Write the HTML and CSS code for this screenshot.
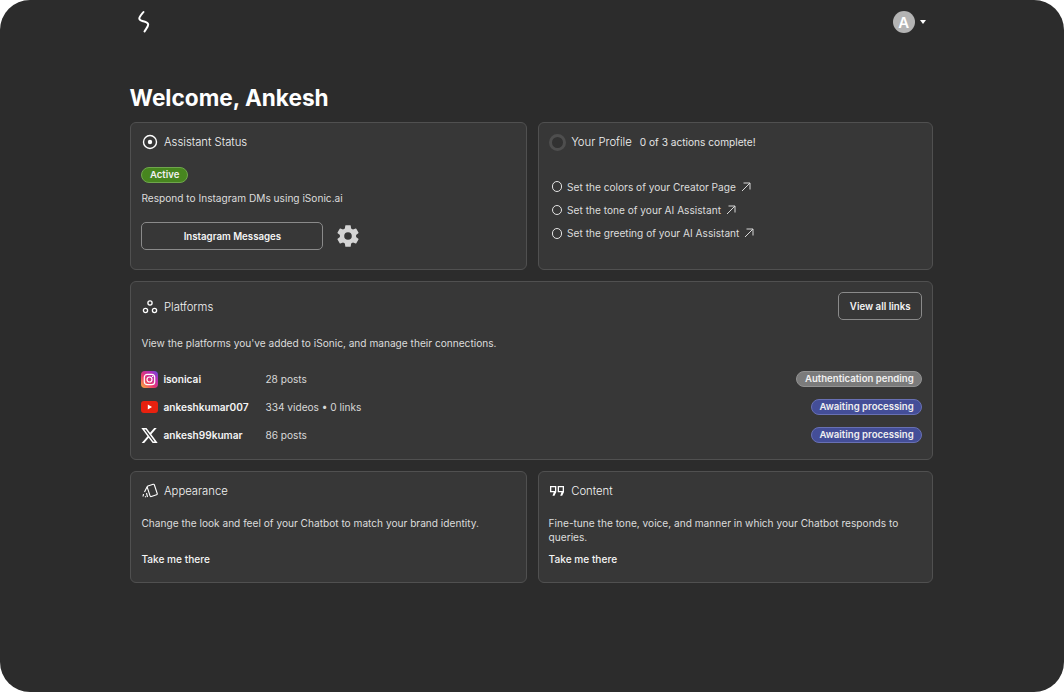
FILE: index.html
```html
<!DOCTYPE html>
<html lang="en">
<head>
<meta charset="utf-8">
<title>iSonic Dashboard</title>
<link rel="stylesheet" href="styles.css">
</head>
<body>
<div class="frame">
  <div class="page">
    <header class="topbar">
      <svg class="logo" width="14" height="24" viewBox="0 0 14 24" fill="none" stroke="#fff" stroke-width="2" stroke-linecap="round" stroke-linejoin="round"><path d="M6.500 2C4.500 4.500 2 7 2.300 8.700C2.500 10.300 4 10.700 6 11.200C8.500 11.800 11 12.300 11.200 14.500C11.300 16.500 9 19 7.500 21.500"/></svg>
      <div class="user">
        <span class="avatar">A</span>
        <span class="caret"></span>
      </div>
    </header>
    <h1 class="welcome">Welcome, Ankesh</h1>
    <main class="grid">
      <section class="card status">
        <div class="head">
          <svg class="hicon" width="16" height="16" viewBox="0 0 16 16" fill="none"><circle cx="8" cy="8" r="6.500" stroke="#fff" stroke-width="1.400"/><circle cx="8" cy="8" r="2.200" fill="#fff"/></svg>
          <h2>Assistant Status</h2>
        </div>
        <span class="pill green">Active</span>
        <p class="text respond">Respond to Instagram DMs using iSonic.ai</p>
        <div class="actions">
          <button class="btn wide">Instagram Messages</button>
          <svg width="26" height="26" viewBox="0 0 24 24" fill="#d4d4d4"><path fill-rule="evenodd" d="M19.430 12.980c.04-.32.07-.64.07-.98s-.03-.66-.07-.98l2.110-1.650a.5.5 0 0 0 .12-.64l-2-3.460a.5.5 0 0 0-.61-.22l-2.490 1a7.300 7.300 0 0 0-1.690-.98l-.38-2.650A.49.49 0 0 0 14 2h-4a.49.49 0 0 0-.49.42l-.38 2.650c-.61.25-1.170.59-1.690.98l-2.490-1a.5.5 0 0 0-.61.22l-2 3.460a.49.49 0 0 0 .12.64l2.110 1.650c-.04.32-.07.65-.07.98s.03.66.07.98l-2.110 1.650a.5.5 0 0 0-.12.64l2 3.460c.12.22.39.3.61.22l2.490-1c.52.4 1.080.73 1.690.98l.38 2.650c.03.24.24.42.49.42h4c.25 0 .46-.18.49-.42l.38-2.650c.61-.25 1.170-.59 1.690-.98l2.490 1c.23.09.49 0 .61-.22l2-3.460a.5.5 0 0 0-.12-.64l-2.110-1.650ZM12 15.500a3.500 3.500 0 1 1 0-7 3.500 3.500 0 0 1 0 7Z"/></svg>
        </div>
      </section>

      <section class="card profile">
        <div class="head">
          <span class="ring"></span>
          <h2>Your Profile</h2>
          <span class="progress">0 of 3 actions complete!</span>
        </div>
        <ul class="tasks">
          <li><span class="dot"></span>Set the colors of your Creator Page<svg class="arrow" width="10" height="10" viewBox="0 0 10 10" fill="none" stroke="#d8d8d8" stroke-width="1"><path d="M1 9 9 1M2.500 1H9v6.500"/></svg></li>
          <li><span class="dot"></span>Set the tone of your AI Assistant<svg class="arrow" width="10" height="10" viewBox="0 0 10 10" fill="none" stroke="#d8d8d8" stroke-width="1"><path d="M1 9 9 1M2.500 1H9v6.500"/></svg></li>
          <li><span class="dot"></span>Set the greeting of your AI Assistant<svg class="arrow" width="10" height="10" viewBox="0 0 10 10" fill="none" stroke="#d8d8d8" stroke-width="1"><path d="M1 9 9 1M2.500 1H9v6.500"/></svg></li>
        </ul>
      </section>

      <section class="card platforms">
        <div class="platforms-top">
          <div class="head">
            <svg class="hicon" width="16" height="16" viewBox="0 0 16 16" fill="none" stroke="#fff" stroke-width="1.300"><circle cx="8" cy="4" r="2.100"/><circle cx="3.500" cy="11.500" r="2.100"/><circle cx="12.500" cy="11.500" r="2.100"/></svg>
            <h2>Platforms</h2>
          </div>
          <button class="btn small">View all links</button>
        </div>
        <p class="text intro">View the platforms you've added to iSonic, and manage their connections.</p>
        <div class="rows">
          <div class="row">
            <svg class="picon" width="17" height="17" viewBox="0 0 17 17" fill="none"><defs><linearGradient id="ig" x1="0" y1="1" x2="1" y2="0"><stop offset="0" stop-color="#fdb53a"/><stop offset=".4" stop-color="#e8386e"/><stop offset=".75" stop-color="#b32dbb"/><stop offset="1" stop-color="#5b4fd8"/></linearGradient></defs><rect width="17" height="17" rx="4" fill="url(#ig)"/><rect x="3.300" y="3.300" width="10.400" height="10.400" rx="3" stroke="#fff" stroke-width="1.200"/><circle cx="8.500" cy="8.500" r="2.500" stroke="#fff" stroke-width="1.200"/><circle cx="11.600" cy="5.400" r=".7" fill="#fff"/></svg>
            <span class="pname">isonicai</span>
            <span class="pmeta">28 posts</span>
            <span class="pill grey">Authentication pending</span>
          </div>
          <div class="row">
            <svg class="picon" width="17" height="12" viewBox="0 0 17 12"><rect width="17" height="12" rx="3" fill="#e8210f"/><path d="M6.800 3.600 11 6 6.800 8.400Z" fill="#fff"/></svg>
            <span class="pname">ankeshkumar007</span>
            <span class="pmeta">334 videos • 0 links</span>
            <span class="pill blue">Awaiting processing</span>
          </div>
          <div class="row">
            <svg class="picon" width="17" height="15" viewBox="0 0 24 22" fill="#fff"><path d="M18.900 0h3.700l-8 9.200L24 22h-7.400l-5.800-7.600L4.200 22H.5l8.600-9.800L0 0h7.600l5.200 6.900L18.900 0Zm-1.300 19.800h2L6.500 2.100H4.300l13.300 17.700Z"/></svg>
            <span class="pname">ankesh99kumar</span>
            <span class="pmeta">86 posts</span>
            <span class="pill blue">Awaiting processing</span>
          </div>
        </div>
      </section>

      <section class="card feature">
        <div class="head">
          <svg class="hicon" width="16" height="16" viewBox="0 0 16 16" fill="none" stroke="#fff" stroke-width="1.100" stroke-linejoin="round"><rect x="6.500" y="2" width="7.500" height="11" rx="1" transform="rotate(-18 10 7.500)"/><path d="M5 4 2.500 9M1.500 11 1 13.500M4 13.500 3 14M5.500 14 4.500 10"/></svg>
          <h2>Appearance</h2>
        </div>
        <p class="text blurb">Change the look and feel of your Chatbot to match your brand identity.</p>
        <a class="link" href="#">Take me there</a>
      </section>

      <section class="card feature">
        <div class="head">
          <svg class="hicon" width="16" height="16" viewBox="0 0 16 16" fill="#fff"><path fill-rule="evenodd" d="M1 3h6.300v6L5.500 12.800H3.500L4.800 9.300H1ZM2.300 4.300v3.700h3.700V4.300ZM8.700 3H15v6l-1.800 3.800h-2L12.500 9.300H8.700ZM10 4.300v3.700h3.700V4.300Z"/></svg>
          <h2>Content</h2>
        </div>
        <p class="text blurb">Fine-tune the tone, voice, and manner in which your Chatbot responds to queries.</p>
        <a class="link" href="#">Take me there</a>
      </section>
    </main>
  </div>
</div>
</body>
</html>
```

FILE: styles.css
```css
* { box-sizing: border-box; }

html, body {
  margin: 0;
  height: 100%;
  background: #ffffff;
}

body {
  font-family: Inter, "Liberation Sans", sans-serif;
  color: #fff;
  overflow: hidden;
}

.frame {
  height: 692px;
  background: #2c2c2c;
  border-radius: 30px;
}

.page {
  width: 803px;
  margin-left: 130.400px;
}

.topbar {
  height: 73px;
  padding: 10px 7px 0 7px;
  display: flex;
  justify-content: space-between;
  align-items: flex-start;
}

.user {
  display: flex;
  align-items: center;
  gap: 5px;
  margin-top: 1px;
  margin-right: 0.600px;
}

.avatar {
  width: 22px;
  height: 22px;
  border-radius: 50%;
  background: #b4b4b4;
  display: flex;
  align-items: center;
  justify-content: center;
  font-size: 15px;
  font-weight: 600;
}

.caret {
  width: 0;
  height: 0;
  border-left: 3.500px solid transparent;
  border-right: 3.500px solid transparent;
  border-top: 4px solid #fff;
}

.welcome {
  margin: 0 0 0 -0.800px;
  height: 49px;
  padding-top: 10px;
  font-size: 22.600px;
  line-height: 29px;
  font-weight: 700;
}

.grid {
  display: grid;
  grid-template-columns: 396.400px 395.600px;
  grid-template-rows: 148px 179px 112px;
  column-gap: 10.800px;
  row-gap: 11px;
}

.card {
  background: #373737;
  border: 1px solid #505050;
  border-radius: 6px;
  padding: 11px 10px;
}

.head {
  display: flex;
  align-items: center;
  height: 16px;
  padding-left: 0.600px;
}

.hicon {
  flex: none;
  margin-right: 6px;
}

.head h2 {
  margin: 0;
  font-size: 11.300px;
  line-height: 16px;
  font-weight: 300;
  color: #f4f4f4;
}

.text {
  margin: 0;
  font-size: 10.150px;
  line-height: 14px;
  color: #dcdcdc;
}

.pill {
  display: inline-block;
  height: 16px;
  padding: 0 7.500px;
  border-radius: 8px;
  font-size: 9.600px;
  line-height: 14px;
  font-weight: 600;
  color: #f0f0f0;
  border: 1px solid transparent;
  white-space: nowrap;
}

.green { background: #47861f; border-color: #6fa64c; margin-top: 17px; }
.grey { background: #7b7b7b; border-color: #929292; margin-left: auto; }
.blue { background: #444e98; border-color: #6870b4; margin-left: auto; }

.respond { margin-top: 8px; }

.actions {
  display: flex;
  align-items: center;
  margin-top: 17px;
  gap: 12px;
}

.btn {
  background: transparent;
  color: #f4f4f4;
  border: 1px solid #8a8a8a;
  border-radius: 5px;
  font-family: inherit;
  font-size: 9.700px;
  font-weight: 600;
}

.wide { width: 182px; height: 28px; }
.small { width: 84px; height: 28px; }

.ring {
  width: 17px;
  height: 17px;
  border-radius: 50%;
  border: 3px solid #4e4e4e;
  background: #323232;
  margin-right: 5px;
  flex: none;
}

.progress {
  margin-left: 8px;
  font-size: 10.150px;
  color: #e4e4e4;
}

.tasks {
  list-style: none;
  margin: 25px 0 0 3px;
  padding: 0;
}

.tasks li {
  display: flex;
  align-items: center;
  height: 23.400px;
  font-size: 10.150px;
  color: #dcdcdc;
}

.dot {
  width: 10.500px;
  height: 10.500px;
  border: 1px solid #e4e4e4;
  border-radius: 50%;
  margin-right: 5px;
  flex: none;
}

.arrow { margin-left: 5px; }

.platforms { grid-column: 1 / 3; padding-top: 10px; }

.platforms-top {
  display: flex;
  justify-content: space-between;
  align-items: center;
}

.platforms-top .head { margin-top: 1px; }

.intro { margin-top: 16px; }

.rows { margin-top: 15px; }

.row {
  display: flex;
  align-items: center;
  height: 28px;
}

.picon {
  flex: none;
  margin-right: 5px;
}

.pname {
  width: 102px;
  font-size: 10.150px;
  font-weight: 600;
  color: #f4f4f4;
}

.pmeta {
  font-size: 10.150px;
  color: #d8d8d8;
}

.blurb { margin-top: 17px; height: 28px; }

.link {
  display: block;
  margin-top: 8px;
  font-size: 10.150px;
  font-weight: 500;
  line-height: 14px;
  color: #f4f4f4;
  text-decoration: none;
}
```
